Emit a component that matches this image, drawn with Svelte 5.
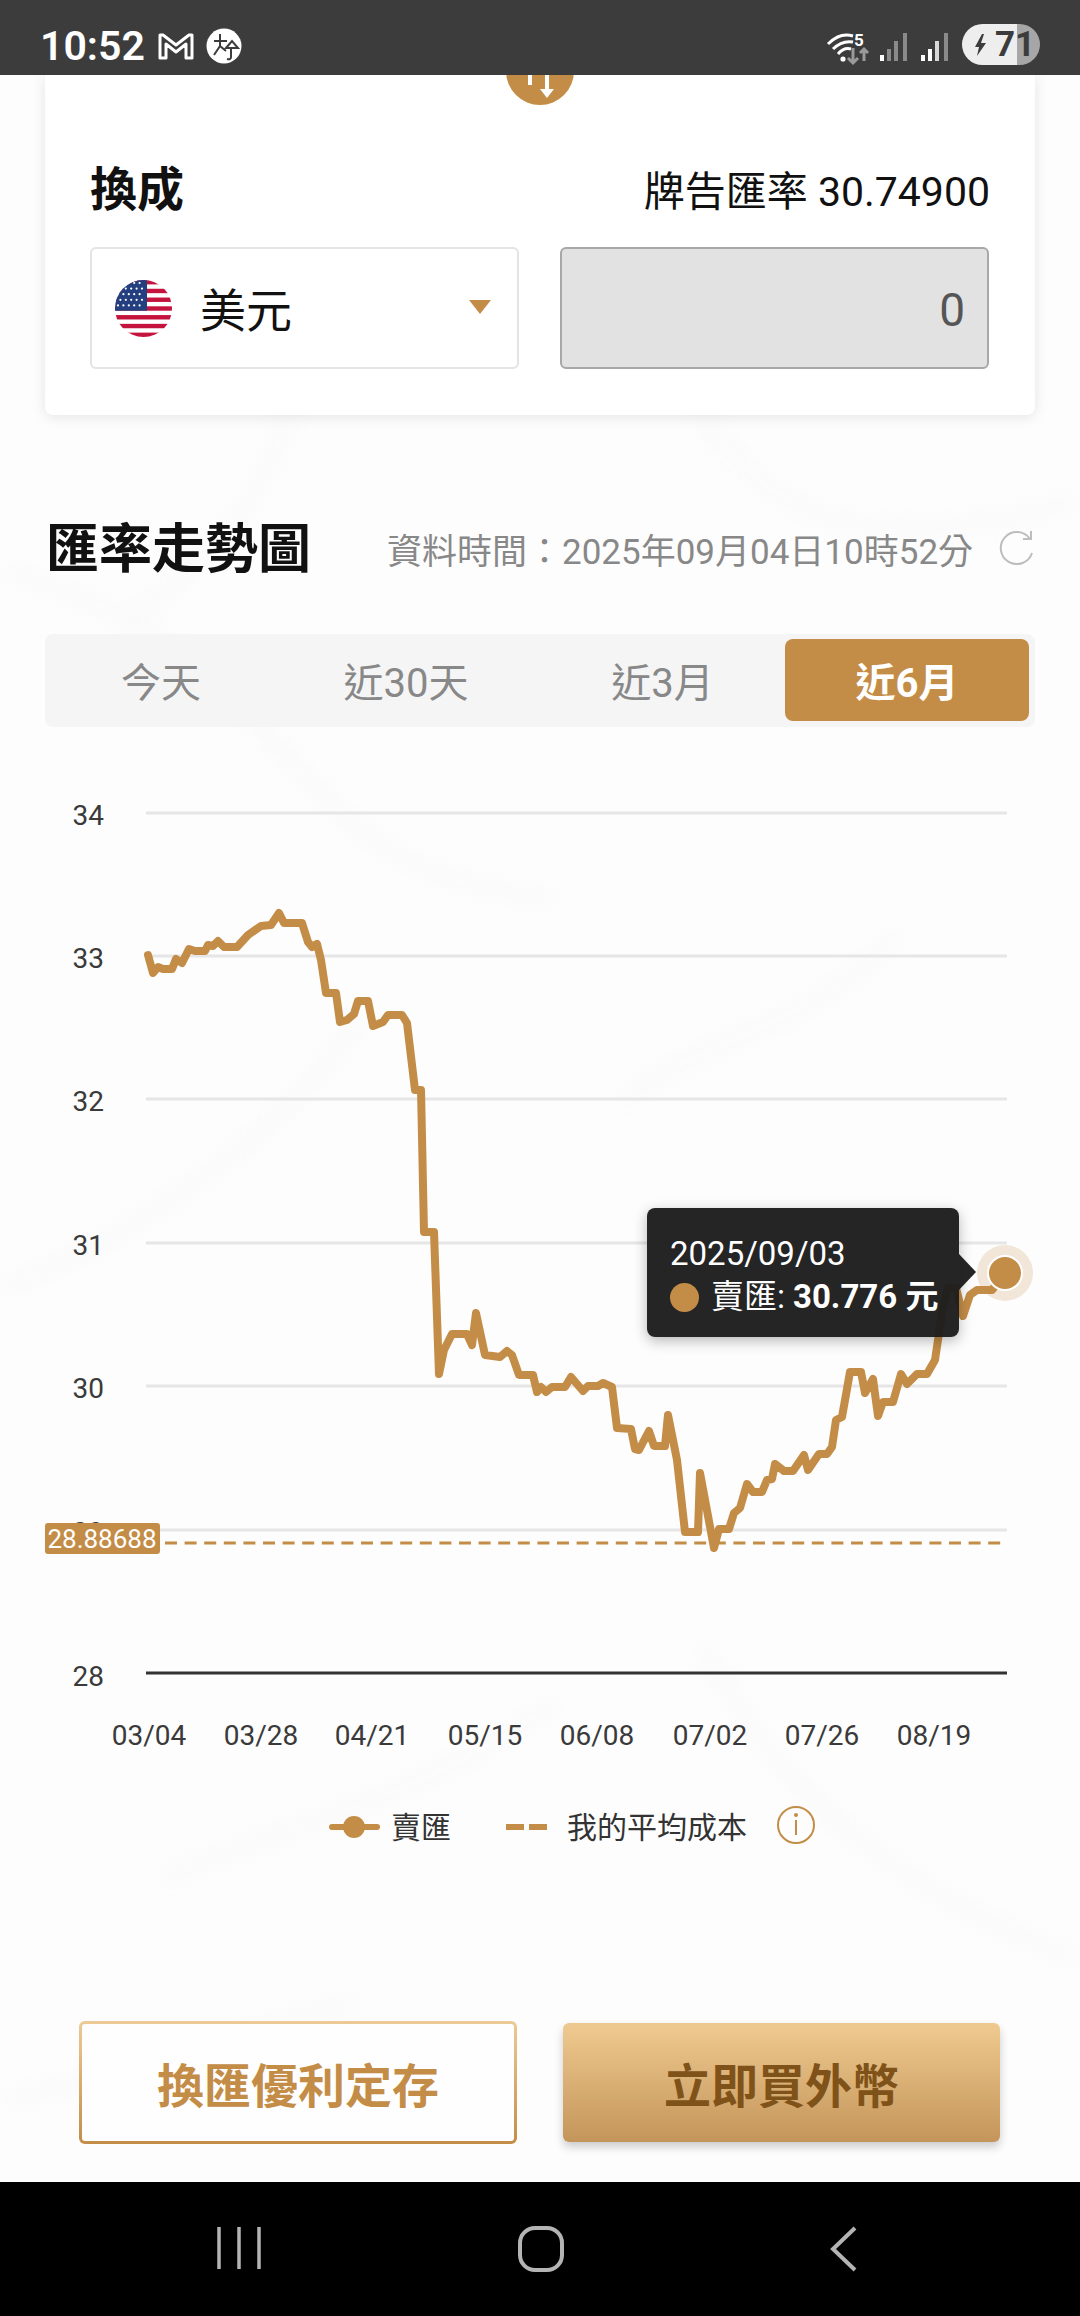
<script lang="ts">
	const gold = '#c48d47';

	const gridLines = [
		{ label: '34', y: 813 },
		{ label: '33', y: 956 },
		{ label: '32', y: 1099 },
		{ label: '31', y: 1243 },
		{ label: '30', y: 1386 },
		{ label: '29', y: 1530 }
	];

	const dates = [
		{ label: '03/04', x: 149 },
		{ label: '03/28', x: 261 },
		{ label: '04/21', x: 372 },
		{ label: '05/15', x: 485 },
		{ label: '06/08', x: 597 },
		{ label: '07/02', x: 710 },
		{ label: '07/26', x: 822 },
		{ label: '08/19', x: 934 }
	];

	const tabs = ['今天', '近30天', '近3月', '近6月'];
	const activeTab = 3;

	// traced from the sell rate series, in page pixels
	const points = [
		[148, 955], [153, 973], [158, 967], [163, 969], [172, 969], [176, 959], [182, 963], [189, 949],
		[195, 951], [205, 951], [208, 945], [213, 946], [218, 941], [224, 947], [237, 947], [248, 935],
		[261, 926], [271, 925], [279, 913], [284, 923], [302, 923], [308, 942], [312, 947], [317, 944],
		[321, 960], [326, 993], [336, 993], [340, 1022], [347, 1020], [354, 1014], [358, 1001], [368, 1001],
		[373, 1026], [383, 1022], [388, 1015], [402, 1015], [407, 1023], [415, 1090], [421, 1090], [424, 1232],
		[434, 1232], [439, 1374], [444, 1350], [452, 1334], [467, 1334], [472, 1345], [476, 1313], [485, 1355],
		[500, 1357], [507, 1351], [512, 1355], [519, 1375], [533, 1375], [537, 1392], [541, 1387], [546, 1392],
		[552, 1387], [565, 1387], [571, 1377], [583, 1391], [588, 1386], [598, 1386], [603, 1383], [612, 1387],
		[617, 1428], [631, 1429], [635, 1449], [639, 1450], [649, 1431], [654, 1446], [665, 1446], [668, 1415],
		[677, 1460], [685, 1532], [698, 1532], [700, 1473], [714, 1548], [719, 1529], [729, 1529], [734, 1513],
		[740, 1508], [747, 1484], [753, 1492], [762, 1492], [767, 1480], [772, 1479], [775, 1464], [784, 1471],
		[793, 1471], [804, 1455], [808, 1470], [819, 1454], [827, 1454], [832, 1447], [836, 1420], [842, 1417],
		[850, 1372], [861, 1372], [865, 1393], [873, 1379], [878, 1416], [883, 1402], [893, 1402], [901, 1374],
		[907, 1384], [917, 1374], [927, 1374], [935, 1360], [942, 1313], [948, 1288], [956, 1288], [963, 1316],
		[970, 1295], [977, 1290], [992, 1290], [1005, 1273]
	];
	const linePath = points.map((p) => p.join(',')).join(' ');

	const stripes = [0, 1, 2, 3, 4, 5, 6];
	const stars: number[][] = [];
	for (let r = 0; r < 5; r++) {
		for (let c = 0; c < 5; c++) {
			stars.push([3 + c * 5.4 + (r % 2 ? 2.4 : 0), 3 + r * 5.6]);
		}
	}
</script>

<div class="page">
	<svg class="marble" viewBox="0 0 1080 2316" aria-hidden="true">
		<defs>
			<filter id="soft"><feGaussianBlur stdDeviation="12" /></filter>
		</defs>
		<g filter="url(#soft)" fill="none" stroke="#ececec" stroke-width="10" opacity="0.35">
			<path d="M0 570 C120 600 200 660 290 760 S420 880 560 900" />
			<path d="M290 415 C250 520 210 560 130 620" />
			<path d="M700 420 C780 520 860 560 1080 500" />
			<path d="M0 1290 C120 1240 260 1160 360 1020" />
			<path d="M620 1100 C700 1040 830 1020 900 930" />
			<path d="M0 2100 C120 2080 240 2030 360 2000" />
			<path d="M160 1880 C300 1820 420 1800 560 1700" />
			<path d="M700 1640 C760 1760 860 1880 1080 1960" />
		</g>
	</svg>

	<header class="status">
		<div class="status-left">
			<span class="time">10:52</span>
			<svg class="gmail" viewBox="0 0 36 28">
				<path d="M2 26V3h3l13 10L31 3h3v23h-6V12l-10 8-10-8v14z" fill="none" stroke="#fff" stroke-width="3" stroke-linejoin="round" />
			</svg>
			<svg class="badge" viewBox="0 0 36 36">
				<circle cx="18" cy="18" r="17.5" fill="#fff" />
				<path d="M8 13h13M14 6v12l-6 9M14 18l6 5" fill="none" stroke="#3c3c3c" stroke-width="2" />
				<path d="M20 20l6-7 6 7zM25 21v8q0 3-4 2" fill="none" stroke="#3c3c3c" stroke-width="2" />
			</svg>
		</div>
		<div class="status-right">
			<svg class="wifi" viewBox="0 -4 54 38">
				<g fill="none" stroke="#fff" stroke-width="3">
					<path d="M2 12Q14 0 27 4" />
					<path d="M7 17Q16 8 27 10" />
					<path d="M12 22Q18 15 25 17" />
				</g>
				<circle cx="17" cy="27" r="2.6" fill="#fff" />
				<text x="28" y="14" class="wifi-num">5</text>
				<path d="M27 16v15M22 26l5 5 5-5M38 29V17M34 21l4-4 4 4" fill="none" stroke="#9a9a9a" stroke-width="3" />
			</svg>
			<svg class="signal sim1" viewBox="0 0 28 30">
				<rect x="0" y="23" width="4" height="6" fill="#fff" />
				<rect x="7" y="17" width="4" height="12" fill="#8a8a8a" />
				<rect x="14" y="9" width="4" height="20" fill="#8a8a8a" />
				<rect x="23" y="1" width="4" height="28" fill="#8a8a8a" />
			</svg>
			<svg class="signal" viewBox="0 0 28 30">
				<rect x="0" y="23" width="4" height="6" fill="#fff" />
				<rect x="7" y="17" width="4" height="12" fill="#fff" />
				<rect x="14" y="9" width="4" height="20" fill="#d8d8d8" />
				<rect x="23" y="1" width="4" height="28" fill="#8a8a8a" />
			</svg>
			<div class="battery">
				<svg class="bolt" viewBox="0 0 12 22"><path d="M7 0L0 13h4l-2 9 9-13H6l3-9z" fill="#3c3c3c" /></svg>
				<span>71</span>
			</div>
		</div>
	</header>

	<main class="main">
		<section class="card">
			<div class="swap">
				<svg viewBox="0 0 68 68">
					<path d="M24 0v10M41 0v16" fill="none" stroke="#fff" stroke-width="4" />
					<path d="M34 14h14l-7 9z" fill="#fff" />
				</svg>
			</div>
			<div class="card-head">
				<h2>換成</h2>
				<span class="rate">牌告匯率 30.74900</span>
			</div>
			<div class="fields">
				<div class="select">
					<svg class="flag" viewBox="0 0 57 57">
						<defs>
							<clipPath id="flagClip"><circle cx="28.5" cy="28.5" r="28.5" /></clipPath>
						</defs>
						<g clip-path="url(#flagClip)">
							<rect width="57" height="57" fill="#fff" />
							{#each stripes as i}
								<rect y={i * 8.77} width="57" height="4.4" fill="#c4133c" />
							{/each}
							<rect width="32" height="30.7" fill="#243f7f" />
							{#each stars as s}
								<circle cx={s[0]} cy={s[1]} r="1.1" fill="#fff" />
							{/each}
						</g>
					</svg>
					<span class="currency">美元</span>
					<span class="caret"></span>
				</div>
				<div class="amount">0</div>
			</div>
		</section>

		<div class="trend-head">
			<h2>匯率走勢圖</h2>
			<span class="stamp">資料時間：2025年09月04日10時52分</span>
			<svg class="refresh" viewBox="0 0 36 36">
				<path d="M31 10A16 16 0 1 0 33 24" fill="none" stroke="#bdbdbd" stroke-width="2" />
				<path d="M24 10h8V2" fill="none" stroke="#bdbdbd" stroke-width="2" />
			</svg>
		</div>

		<div class="tabs">
			{#each tabs as tab, i}
				<div class="tab" class:active={i === activeTab}>{tab}</div>
			{/each}
		</div>

		<div class="chart">
			<svg class="plot" viewBox="0 780 1080 1100">
				{#each gridLines as g}
					<line x1="146" x2="1007" y1={g.y} y2={g.y} stroke="#e6e6e6" stroke-width="3" />
					<text class="axis" x="104" y={g.y + 12} text-anchor="end">{g.label}</text>
				{/each}
				<line x1="146" x2="1007" y1="1673" y2="1673" stroke="#333" stroke-width="3" />
				<text class="axis" x="104" y="1686" text-anchor="end">28</text>
				{#each dates as d}
					<text class="axis" x={d.x} y="1745" text-anchor="middle">{d.label}</text>
				{/each}

				<line x1="165" x2="1007" y1="1543" y2="1543" stroke={gold} stroke-width="3" stroke-dasharray="12 7.6" />
				<rect x="45" y="1523" width="115" height="31" rx="3" fill={gold} />
				<text class="avg" x="102" y="1548" text-anchor="middle">28.88688</text>

				<polyline points={linePath} fill="none" stroke={gold} stroke-width="8" stroke-linejoin="round" stroke-linecap="round" />
				<circle cx="1005" cy="1273" r="28" fill={gold} opacity="0.2" />
				<circle cx="1005" cy="1273" r="17" fill={gold} stroke="#fff" stroke-width="2" />

				<line x1="332" x2="377" y1="1827" y2="1827" stroke={gold} stroke-width="6" stroke-linecap="round" />
				<circle cx="354" cy="1827" r="11" fill={gold} />
				<text class="legend" x="391" y="1838">賣匯</text>
				<line x1="506" x2="547" y1="1827" y2="1827" stroke={gold} stroke-width="6" stroke-dasharray="18 5" />
				<text class="legend" x="567" y="1838">我的平均成本</text>
				<circle cx="796" cy="1825" r="18" fill="none" stroke={gold} stroke-width="2" />
				<circle cx="796" cy="1815" r="2" fill={gold} />
				<line x1="796" x2="796" y1="1820" y2="1835" stroke={gold} stroke-width="2" />
			</svg>

			<div class="tip">
				<div class="tip-date">2025/09/03</div>
				<div class="tip-row">
					<span class="tip-dot"></span>
					<span>賣匯:</span>
					<b>30.776 元</b>
				</div>
				<span class="tip-arrow"></span>
			</div>
		</div>

		<div class="actions">
			<div class="btn outline">換匯優利定存</div>
			<div class="btn solid">立即買外幣</div>
		</div>
	</main>

	<nav class="navbar">
		<svg class="nav-recent" viewBox="0 0 44 44">
			<path d="M2 1v42M22 1v42M42 1v42" fill="none" stroke="#b4b4b4" stroke-width="3.5" />
		</svg>
		<svg class="nav-home" viewBox="0 0 46 46">
			<rect x="2" y="2" width="42" height="42" rx="15" fill="none" stroke="#b4b4b4" stroke-width="4" />
		</svg>
		<svg class="nav-back" viewBox="0 0 28 46">
			<path d="M25 2L3 23l22 21" fill="none" stroke="#b4b4b4" stroke-width="4" />
		</svg>
	</nav>
</div>

<style>
	:global(body) {
		margin: 0;
		background: #fcfcfc;
	}

	.page {
		position: relative;
		width: 1080px;
		height: 2316px;
		overflow: hidden;
		display: flex;
		flex-direction: column;
		background: #fdfdfd;
		font-family: Roboto, 'Noto Sans CJK TC', sans-serif;
		color: #111;
	}

	.marble {
		position: absolute;
		inset: 0;
		width: 1080px;
		height: 2316px;
	}

	.status {
		position: relative;
		z-index: 2;
		flex: none;
		height: 75px;
		background: #3c3c3c;
		display: flex;
		align-items: center;
		justify-content: space-between;
		padding: 17px 40px 0 40px;
		box-sizing: border-box;
		color: #fff;
	}

	.status-left,
	.status-right {
		display: flex;
		align-items: center;
	}

	.time {
		font-size: 41px;
		font-weight: 600;
		width: 118px;
		line-height: 1;
	}

	.gmail {
		width: 36px;
		height: 28px;
		margin-right: 12px;
	}

	.badge {
		width: 36px;
		height: 36px;
	}

	.wifi {
		width: 54px;
		height: 38px;
		margin-top: 1px;
	}

	.wifi-num {
		font-size: 17px;
		font-weight: 700;
		fill: #fff;
	}

	.signal {
		width: 28px;
		height: 30px;
		margin-left: 13px;
		margin-top: 1px;
	}

	.signal.sim1 {
		margin-left: 0;
	}

	.battery {
		width: 78px;
		height: 41px;
		margin-left: 13px;
		margin-top: -3px;
		border-radius: 21px;
		background: linear-gradient(90deg, #eeeeee 70%, #a6a6a6 70%);
		display: flex;
		align-items: center;
		padding-left: 13px;
		box-sizing: border-box;
		color: #3c3c3c;
		font-size: 35px;
		font-weight: 700;
	}

	.bolt {
		width: 12px;
		height: 22px;
		margin-right: 8px;
	}

	.main {
		position: relative;
		flex: 1;
		display: flex;
		flex-direction: column;
	}

	.card {
		position: relative;
		margin: 0 45px;
		height: 340px;
		box-sizing: border-box;
		padding: 87px 45px 0;
		background: #fff;
		border-radius: 0 0 8px 8px;
		box-shadow: 0 2px 14px rgba(0, 0, 0, 0.1);
	}

	.swap {
		position: absolute;
		top: -34px;
		left: 461px;
		width: 68px;
		height: 64px;
		border-radius: 0 0 34px 34px;
		background: #c48d47;
		overflow: hidden;
	}

	.swap svg {
		position: absolute;
		top: 34px;
		left: 0;
		width: 68px;
		height: 68px;
	}

	.card-head {
		display: flex;
		align-items: center;
		justify-content: space-between;
		height: 56px;
	}

	.card-head h2 {
		margin: 0;
		font-size: 47px;
		font-weight: 700;
		line-height: 56px;
	}

	.rate {
		font-size: 41px;
		color: #111;
		margin-top: -5px;
	}

	.fields {
		display: grid;
		grid-template-columns: 429px 429px;
		gap: 41px;
		margin-top: 29px;
	}

	.select,
	.amount {
		height: 122px;
		box-sizing: border-box;
		border-radius: 6px;
	}

	.select {
		display: flex;
		align-items: center;
		border: 2px solid #e4e4e4;
		padding-left: 23px;
		background: #fff;
	}

	.flag {
		width: 57px;
		height: 57px;
	}

	.currency {
		font-size: 46px;
		margin-left: 28px;
		margin-top: 5px;
		line-height: 1;
	}

	.caret {
		width: 0;
		height: 0;
		margin-left: auto;
		margin-right: 26px;
		margin-top: -3px;
		border-left: 11px solid transparent;
		border-right: 11px solid transparent;
		border-top: 14px solid #c48d47;
	}

	.amount {
		display: flex;
		align-items: center;
		justify-content: flex-end;
		padding: 4px 22px 0 0;
		background: #e2e2e2;
		border: 2px solid #a8a8a8;
		color: #555;
		font-size: 46px;
	}

	.trend-head {
		position: relative;
		display: flex;
		align-items: center;
		height: 60px;
		margin-top: 105px;
		padding: 0 45px 0 46px;
	}

	.trend-head h2 {
		margin: 0;
		font-size: 53px;
		font-weight: 700;
		color: #111;
		line-height: 60px;
		width: 341px;
		flex: none;
	}

	.stamp {
		font-size: 35px;
		letter-spacing: 0;
		color: #888;
		white-space: nowrap;
		margin-top: -3px;
	}

	.refresh {
		width: 36px;
		height: 36px;
		margin-left: auto;
		margin-top: -6px;
	}

	.tabs {
		position: relative;
		display: grid;
		grid-template-columns: 222px 268px 245px 244px;
		margin: 54px 45px 0;
		height: 93px;
		padding: 5px 6px 6px 5px;
		box-sizing: border-box;
		border-radius: 8px;
		background: #f5f5f5;
	}

	.tab {
		display: flex;
		align-items: center;
		justify-content: center;
		font-size: 40px;
		color: #888;
		border-radius: 8px;
	}

	.tab.active {
		background: #c48d47;
		color: #fff;
		font-weight: 700;
	}

	.chart {
		position: relative;
		height: 1100px;
		margin-top: 53px;
	}

	.plot {
		display: block;
		width: 1080px;
		height: 1100px;
	}

	.axis {
		font-size: 28px;
		fill: #3a3a3a;
	}

	.avg {
		font-size: 26px;
		fill: #fff;
	}

	.legend {
		font-size: 30px;
		fill: #333;
	}

	.tip {
		position: absolute;
		left: 647px;
		top: 428px;
		width: 312px;
		height: 129px;
		box-sizing: border-box;
		padding: 25px 0 0 23px;
		border-radius: 8px;
		background: rgba(28, 28, 28, 0.96);
		box-shadow: 0 4px 14px rgba(0, 0, 0, 0.28);
		color: #fff;
		font-size: 33px;
		line-height: 42px;
	}

	.tip-arrow {
		position: absolute;
		left: 100%;
		top: 46px;
		width: 0;
		height: 0;
		border-top: 18px solid transparent;
		border-bottom: 18px solid transparent;
		border-left: 17px solid rgba(28, 28, 28, 0.96);
	}

	.tip-row {
		display: flex;
		align-items: center;
		margin-top: 1px;
	}

	.tip-row b {
		margin-left: 8px;
		font-size: 33px;
		font-weight: 700;
		white-space: nowrap;
	}

	.tip-dot {
		width: 29px;
		height: 29px;
		margin-right: 12px;
		border-radius: 50%;
		background: #c48d47;
	}

	.actions {
		position: relative;
		display: grid;
		grid-template-columns: 438px 437px;
		gap: 46px;
		align-items: center;
		padding: 0 80px 0 79px;
		margin-top: 141px;
	}

	.btn {
		display: flex;
		align-items: center;
		justify-content: center;
		box-sizing: border-box;
		border-radius: 6px;
		font-size: 47px;
		font-weight: 700;
	}

	.outline {
		height: 123px;
		border: 3px solid transparent;
		background:
			linear-gradient(#fefefe, #fefefe) padding-box,
			linear-gradient(#eccb96, #c48d47) border-box;
		color: #c48d47;
	}

	.solid {
		height: 119px;
		background: linear-gradient(#efca90, #c4955a);
		box-shadow: 0 5px 10px rgba(0, 0, 0, 0.2);
		color: #7f5219;
	}

	.navbar {
		position: relative;
		flex: none;
		height: 134px;
		background: #000;
	}

	.nav-recent,
	.nav-home,
	.nav-back {
		position: absolute;
		top: 44px;
	}

	.nav-recent {
		left: 217px;
		width: 44px;
		height: 44px;
	}

	.nav-home {
		left: 518px;
		width: 46px;
		height: 46px;
	}

	.nav-back {
		left: 830px;
		width: 28px;
		height: 46px;
	}
</style>
